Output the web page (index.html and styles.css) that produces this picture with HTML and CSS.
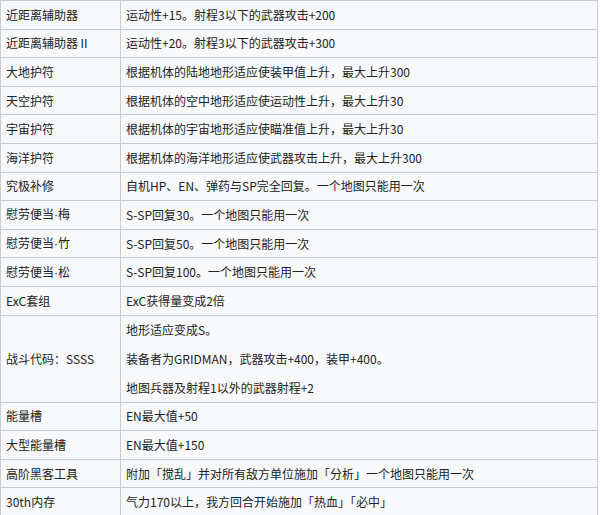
FILE: index.html
```html
<!DOCTYPE html>
<html lang="zh-CN">
<head>
<meta charset="utf-8">
<link rel="stylesheet" href="styles.css">
</head>
<body>
<table class="items">
<tbody>
<tr><td class="name">近距离辅助器</td><td class="desc">运动性+15。射程3以下的武器攻击+200</td></tr>
<tr><td class="name">近距离辅助器Ⅱ</td><td class="desc">运动性+20。射程3以下的武器攻击+300</td></tr>
<tr><td class="name">大地护符</td><td class="desc">根据机体的陆地地形适应使装甲值上升，最大上升300</td></tr>
<tr><td class="name">天空护符</td><td class="desc">根据机体的空中地形适应使运动性上升，最大上升30</td></tr>
<tr><td class="name">宇宙护符</td><td class="desc">根据机体的宇宙地形适应使瞄准值上升，最大上升30</td></tr>
<tr><td class="name">海洋护符</td><td class="desc">根据机体的海洋地形适应使武器攻击上升，最大上升300</td></tr>
<tr><td class="name">究极补修</td><td class="desc">自机HP、EN、弹药与SP完全回复。一个地图只能用一次</td></tr>
<tr><td class="name">慰劳便当<span class="dot">·</span>梅</td><td class="desc">S-SP回复30。一个地图只能用一次</td></tr>
<tr><td class="name">慰劳便当<span class="dot">·</span>竹</td><td class="desc">S-SP回复50。一个地图只能用一次</td></tr>
<tr><td class="name">慰劳便当<span class="dot">·</span>松</td><td class="desc">S-SP回复100。一个地图只能用一次</td></tr>
<tr><td class="name">ExC套组</td><td class="desc">ExC获得量变成2倍</td></tr>
<tr class="tall"><td class="name">战斗代码：SSSS</td><td class="desc"><p>地形适应变成S。</p><p>装备者为GRIDMAN，武器攻击+400，装甲+400。</p><p>地图兵器及射程1以外的武器射程+2</p></td></tr>
<tr><td class="name">能量槽</td><td class="desc">EN最大值+50</td></tr>
<tr><td class="name">大型能量槽</td><td class="desc">EN最大值+150</td></tr>
<tr><td class="name">高阶黑客工具</td><td class="desc">附加「搅乱」并对所有敌方单位施加「分析」一个地图只能用一次</td></tr>
<tr><td class="name">30th内存</td><td class="desc">气力170以上，我方回合开始施加「热血」「必中」</td></tr>
</tbody>
</table>
</body>
</html>
```
FILE: styles.css
```css
html, body {
  margin: 0;
  padding: 0;
  background: #ffffff;
}
body {
  font-family: "Noto Sans CJK SC", "Noto Sans", sans-serif;
  font-size: 12px;
  color: #222222;
}
.items {
  border-collapse: collapse;
  width: 598px;
  background: #f8f9fa;
  border: 1px solid #b4b8bd;
}
.items td {
  border: 1px solid #c8ccd1;
  height: 28.6px;
  padding: 0 5px;
  vertical-align: middle;
  line-height: 18px;
  box-sizing: border-box;
}
.items td.name {
  width: 120px;
}
.dot {
  font-family: "Liberation Sans", sans-serif;
}
.items .tall td {
  height: 87px;
}
.items .tall p {
  margin: 11px 0;
}
.items .tall p:first-child {
  margin-top: 0;
}
.items .tall p:last-child {
  margin-bottom: 0;
}
```
